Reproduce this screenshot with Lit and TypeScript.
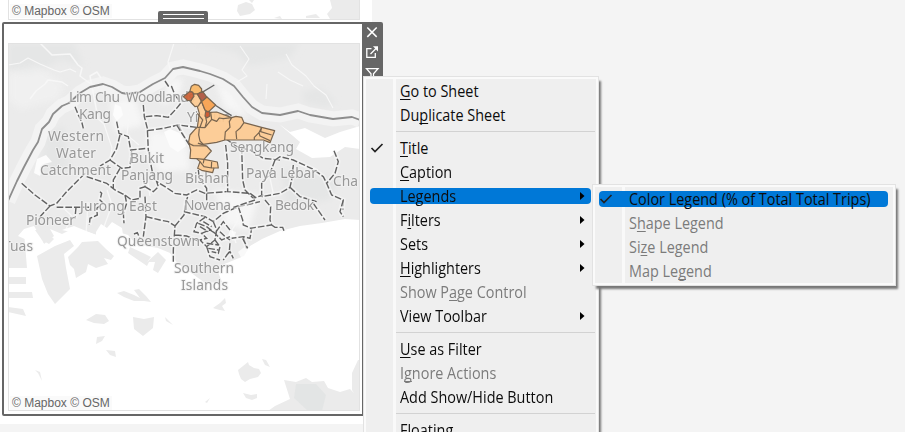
import { LitElement, html, svg, css, nothing } from "lit";
import { customElement, property } from "lit/decorators.js";
import { classMap } from "lit/directives/class-map.js";

interface MenuEntry {
  label?: string;
  key?: number;
  checked?: boolean;
  active?: boolean;
  disabled?: boolean;
  sub?: boolean;
}

const MAIN: MenuEntry[] = [
  { label: "Go to Sheet", key: 0 },
  { label: "Duplicate Sheet", key: 2 },
  {},
  { label: "Title", key: 0, checked: true },
  { label: "Caption", key: 0 },
  { label: "Legends", active: true, sub: true },
  { label: "Filters", key: 1, sub: true },
  { label: "Sets", sub: true },
  { label: "Highlighters", key: 0, sub: true },
  { label: "Show Page Control", key: 6, disabled: true },
  { label: "View Toolbar", sub: true },
  {},
  { label: "Use as Filter", key: 0 },
  { label: "Ignore Actions", key: 1, disabled: true },
  { label: "Add Show/Hide Button" },
  {},
  { label: "Floating" },
];

const LEGENDS: MenuEntry[] = [
  { label: "Color Legend (% of Total Total Trips)", checked: true, active: true },
  { label: "Shape Legend", key: 1, disabled: true },
  { label: "Size Legend", key: 2, disabled: true },
  { label: "Map Legend", key: 6, disabled: true },
];

@customElement("context-menu")
export class ContextMenu extends LitElement {
  @property({ attribute: false }) items: MenuEntry[] = [];

  static styles = css`
    :host {
      display: block;
      box-sizing: border-box;
      border: 1px solid #e2e2e2;
      background: #fafafa;
      padding: 2px;
      box-shadow: 3px 4px 2px -1px #777;
      font: 15.5px/24px "Open Sans", "Noto Sans", sans-serif;
      color: #0c0c0c;
    }
    .body {
      box-sizing: border-box;
      height: 100%;
      padding-top: 1px;
      background: linear-gradient(90deg, #efefef 27px, #f9f9f9 27px 30px, #efefef 30px);
    }
    .row {
      display: grid;
      grid-template-columns: 34px 1fr 16px;
      height: 24px;
      position: relative;
      isolation: isolate;
      white-space: nowrap;
    }
    .row.active::before {
      content: "";
      position: absolute;
      z-index: -1;
      inset: 3px 5px 5px 4px;
      border-radius: 4px;
      background: #0078d7;
    }
    .disabled { color: #7b7b7b; }
    .label {
      justify-self: start;
      transform-origin: left;
      transform: translateY(-1px) scaleX(0.93);
    }
    u { text-decoration-thickness: 1px; text-underline-offset: 2px; text-decoration-skip-ink: none; }
    .sep { height: 9px; padding: 3px 1px 0 30px; box-sizing: border-box; }
    .line { height: 1px; background: #d2d2d2; }
    svg { display: block; }
    .check { margin: 5px 0 0 4px; }
    .arrow { margin-top: 7px; }
  `;

  private text(e: MenuEntry) {
    const s = e.label!;
    if (e.key === undefined) return s;
    return html`${s.slice(0, e.key)}<u>${s[e.key]}</u>${s.slice(e.key + 1)}`;
  }

  render() {
    return html`<div class="body">
      ${this.items.map((e) =>
        e.label
          ? html`<div class=${classMap({ row: true, active: !!e.active, disabled: !!e.disabled })}>
              <span>${e.checked
                ? html`<svg class="check" width="14" height="12" viewBox="0 0 14 12"><path d="M1.5 6 L5 9.5 L12.5 2" fill="none" stroke="#222" stroke-width="1.7" /></svg>`
                : nothing}</span>
              <span class="label">${this.text(e)}</span>
              ${e.sub
                ? html`<svg class="arrow" width="6" height="9" viewBox="0 0 6 9"><path d="M0 0 L4.5 4 L0 8Z" fill="#000" /></svg>`
                : nothing}
            </div>`
          : html`<div class="sep"><div class="line"></div></div>`
      )}
    </div>`;
  }
}

const BORDER =
  "M8 201L17 181L24 167L33 150L38 142L42 129L49 122L53 114L62 106L69 103L80 93L90 87L103 84L112 87L122 93L128 94L140 92L153 84L165 78L173 69L183 67L200 71L210 74L223 79L234 86L243 97L252 107L262 113L280 115L298 111L310 115L333 119L352 117L360 120";

// [text, x, baseline, rendered width]
const PLACES: [string, number, number, number][] = [
  ["Lim Chu", 69, 102, 51],
  ["Kang", 79, 119, 32],
  ["Woodlands", 126, 102, 69],
  ["Yishun", 187, 122, 43],
  ["Western", 48, 141, 56],
  ["Water", 56, 158, 40],
  ["Catchment", 40, 175, 71],
  ["Bukit", 130, 163, 34],
  ["Panjang", 121, 180, 52],
  ["Bishan", 185, 183, 44],
  ["Sengkang", 230, 152, 64],
  ["Paya Lebar", 246, 178, 71],
  ["Cha", 333, 186, 25],
  ["Jurong East", 80, 211, 77],
  ["Pioneer", 26, 225, 49],
  ["Novena", 184, 210, 47],
  ["Bedok", 275, 210, 39],
  ["Tuas", 3, 251, 30],
  ["Queenstown", 117, 246, 83],
  ["Southern", 174, 273, 60],
  ["Islands", 181, 290, 47],
];

@customElement("island-map")
export class IslandMap extends LitElement {
  static styles = css`
    :host { display: block; }
    svg { display: block; }
    .place {
      font: 13.8px "Noto Sans", "Open Sans", sans-serif;
      fill: #989898;
      stroke: #f2f2f2;
      stroke-opacity: 0.75;
      stroke-width: 2.2px;
      paint-order: stroke;
      stroke-linejoin: round;
    }
    .road { fill: none; stroke: #626262; stroke-width: 4.2; stroke-dasharray: 20 6; }
    .glow { fill: none; stroke: #f7f7f7; stroke-width: 14; stroke-opacity: 0.6; }
    .zone { stroke: #79654f; stroke-width: 3.6; stroke-linejoin: round; }
  `;

  private readonly center =
    "M315 3L325 18L335 20L345 45L360 65M250 75L253 110L262 145L265 210L270 240L280 290L285 305M257 110L290 107L325 112L350 85L370 60M262 152L310 145L355 135L410 142M355 135L370 165L388 194L415 194M45 80L55 105L65 125L70 145M170 125L177 160L205 170L212 210L262 205M180 165L170 205L150 240L120 258M150 240L185 265L210 262L215 215M180 265L160 300L160 325M80 290L140 310L165 330L195 345L215 360L240 355L240 325L255 320L250 290M255 320L280 335L295 320L290 305L315 320L345 340L380 345L410 330L435 340L500 335M120 335L125 340L120 360L130 370L110 385L112 405L90 415L88 435M195 345L200 370L190 400L192 430M255 350L258 410L250 470M258 410L300 420L325 425L345 438L340 510L340 545M345 438L372 405L378 365L385 345M372 395L435 410L460 425L490 400L535 380M497 195L503 250L503 335L570 340L590 355M415 270L418 295L440 325L440 365M545 200L548 300L555 330L580 355L610 345M535 380L600 365M535 380L548 420L550 435L575 445L570 475L550 470L515 475M550 470L560 505M345 465L380 468L420 485M222 462L232 458L240 475M500 178L530 200L570 210L610 235L660 240";
  private readonly downtown =
    "M435 412L410 430L402 455L425 460L450 450L465 460L490 425L510 450M415 430L440 440L465 460L485 480L510 470M460 425L470 450L465 480L440 500L420 480L440 475L425 460M440 500L450 530L480 540M465 480L480 500L475 520L455 515M480 455L495 470L510 480M420 440L445 455M430 425L455 440M440 490L475 495M445 505L475 510M500 525L510 515L520 535M510 490L508 515L490 540";
  private readonly east =
    "M285 240L270 280L245 310L245 345M285 240L300 230L340 240L400 268L430 290L440 310L455 345L490 360L488 390M340 255L335 300L330 322L300 340L245 350M330 322L360 350L410 365M462 212L475 245L465 280L440 310M225 360L160 382";
  private readonly southeast =
    "M255 0L272 20L270 60L275 75L210 85M275 75L285 82L308 82L313 95M188 115L203 145M400 10L435 60M490 0L480 35L490 50";
  private readonly west =
    "M65 190L105 225L150 258L170 250L200 215L255 160M150 258L120 290M170 262L270 262M228 262L225 295M530 15L568 75";

  private roads(d: string, x: number, y: number) {
    return svg`<g transform=${`translate(${x} ${y}) scale(.3333)`}><path class="glow" d=${d}/><path class="road" d=${d}/></g>`;
  }

  render() {
    return html`<svg width="352" height="368" viewBox="8 43 352 368">
      <defs><filter id="soft"><feGaussianBlur stdDeviation="3" /></filter></defs>
      <rect x="8" y="43" width="352" height="368" fill="#fff" />
      <path fill="#ebebeb" d="M8 43H360V220L345 219L322 223L300 226L280 231L262 239L250 246L244 256L222 265L218 272L222 282L205 283L190 272L178 264L170 253L158 248L146 246L135 243L128 235L112 230L100 236L88 232L70 230L62 234L50 229L54 236L44 244L34 230L24 232L27 268H8Z" />
      <g fill="#e5e6e6" filter="url(#soft)">
        <path d="M8 43H74L84 66L60 60L30 76L8 70Z" />
        <path d="M190 43H300L290 58L250 66L235 52Z" />
        <path d="M302 92L320 87L336 102L326 108L304 103Z" />
        <path d="M44 132L64 126L70 170L40 175Z" />
        <path d="M282 170L340 178L330 200L285 205Z" />
      </g>
      <g fill="#f6f6f6" filter="url(#soft)">
        <path d="M8 72L38 66L65 85L58 100L20 110L8 100Z" opacity=".5" />
        <path d="M150 130L185 135L190 170L160 172L146 152Z" />
        <path d="M110 100L135 98L144 125L115 132Z" />
        <path d="M170 80L183 78L178 100L160 104Z" />
        <path d="M215 82L232 90L250 118L225 108Z" />
        <path d="M215 190L260 195L248 230L225 225Z" />
      </g>
      <path d=${BORDER} fill="none" stroke="#f3f3f3" stroke-width="15" />
      <path fill="#fff" d="M279 124L290 132L305 128L325 138L340 132L360 126V149L345 147L330 157L312 158L296 149L300 142Z" />
      <path fill="#fcfcfc" d="M115 104l6 3 2 8-6 6-4-6zM164 132l6-3 12 5 4 12-8 6-8-5zM37 159l9-4 6 7-8 2-4 12-6-3z" />
      <g fill="none" stroke="#f7f7f7" stroke-width="1.5" stroke-linejoin="round">
        <path d="M40 43L52 55L70 54L78 65L82 68L80 76L88 82L99 88M98 118L90 76L97 72L101 78M30 99L36 91L45 84L48 80L62 82L68 86" />
        <path d="M174 43L168 62L171 72M8 65L20 63L28 58L40 64L54 70L60 72L70 69L76 72" stroke-width="1.2" />
        <path d="M240 46L249 59L242 70L247 76L237 82M286 54L292 65L306 76L314 86L326 95L333 108M278 72L290 80L303 86M267 84L266 99M97 118L104 124L112 148L108 170M130 105L127 135L139 145" stroke-width="1.1" />
        <path d="M88 202L86 235M107 190L112 205L102 232M236 205L238 220L232 230L236 243M146 170L150 196M60 205L72 216L66 229M270 178L274 197M300 165L318 170" stroke-width="1.3" />
      </g>
      <g fill="#fff">
        <path d="M18 236L24 229L34 226L40 236L45 246L60 248L50 258L28 262L27 240ZM62 230l12-4 22 9-3 6-18-8z" />
        <path d="M8 269H27V277H8ZM96 232l5-8 6 4 5-6 10 6 2 14-28-3z" />
        <path d="M238 252l9-7 5 8-9 8zM230 230l6 2-2 8-6-4z" opacity=".7" />
      </g>
      <g fill="#ebebeb">
        <path d="M37 256L55 246L70 240L74 246L64 254L66 268L70 289L55 304L48 294L42 279Z" />
        <path d="M68 257L78 247L82 242L98 241L106 249L114 256L111 260L104 258L108 264L96 268L88 264L86 272L76 278L74 269L70 265Z" />
        <path d="M35 230L44 230L54 239L49 244L42 240Z" />
        <path d="M8 277H26L26 284H8ZM8 292H32L33 298H8ZM8 307L23 309L26 316L8 312Z" />
        <path d="M130 247L143 253L151 257L147 262L158 252L166 260L158 273L153 270L155 262L149 262L147 266L128 253Z" />
        <path d="M117 293L124 291L134 295L140 298L134 290L139 289L146 296L151 302L144 301L134 301L124 297Z" />
        <path d="M86 320L96 314L105 315L109 321L104 324L94 323ZM133 317L144 319L154 317L153 328L143 336L134 329ZM165 317L173 325L166 321ZM97 337l8-1-3 5-6 3zM106 350l9 1 1 6-6-2zM35 370l5 2 2 9-4-8z" />
        <path d="M213 308l7-5 5-5 1 5-4 3 3 5-5-1-4-1zM238 370l5-4 5-4 1 3 5 3 5 1 2 4-3 4-8 2-5 3-4-3-2-5zM262 359l4 1 4 7-5-2zM243 393l8 2 6-1 0 4-5 2-6-2zM205 402l5-4-3 5z" />
        <path d="M284 380L296 382L306 378L312 382L324 381L328 388L340 392L350 389L360 399V411H268L275 406L290 399ZM352 373L358 360H360V402L352 390Z" />
      </g>
      <path d="M296 384L316 384L326 395L322 411H308L294 398Z" fill="#e3e5e5" />
      <path d=${BORDER} fill="none" stroke="#8d8d8d" stroke-width="1.8" stroke-linejoin="round" />
      ${this.roads(this.center, 60, 80)}
      ${this.roads(this.downtown, 60, 80)}
      ${this.roads(this.east, 180, 80)}
      ${this.roads(this.southeast, 180, 200)}
      ${this.roads(this.west, 0, 120)}
      ${PLACES.map(([t, x, y, w]) => svg`<text class="place" x=${x} y=${y} textLength=${w}>${t}</text>`)}
      <g transform="translate(60 80) scale(.3333)" fill="#fdca91" fill-opacity=".93">
        <path d="M425 38L463 15M465 75L500 98L515 107" fill="none" stroke="#666" stroke-width="4" />
        <path class="zone" d="M412 142L418 100L412 80L425 65L436 92L450 97L470 96L515 113L528 109L545 112L552 128L605 142L644 152L630 188L610 180L495 180L470 187L430 193L415 190L440 198L454 213L432 238L472 246L475 264L462 264L458 278L425 271L413 265L420 245L410 236L390 235L392 210L386 185L390 165L405 148Z" />
        <path class="zone" fill="none" d="M418 145L416 165L420 183L430 193M412 142L435 143L440 125L437 112M435 143L455 118L470 124L478 114L490 116L515 113L508 125L510 142L496 156L494 180M552 128L540 145L528 155L530 177M605 142L597 158L583 172L583 180M605 142L602 155L635 165M597 158L600 168L630 182M386 190L400 197L440 198M410 236L432 238M420 245L432 260L455 264M432 238L430 250M455 245L454 264L462 264M452 97L455 118M412 100L428 120L420 142" />
        <path class="zone" d="M390 32L394 19L404 13L416 16L425 27L424 38L412 42L402 42Z" fill="#f9b765" />
        <path class="zone" d="M402 42L412 42L425 62L415 78L405 80L392 66Z" />
        <path class="zone" d="M370 50L388 35L398 36L402 49L392 62L382 61Z" fill="#cc6035" />
        <path class="zone" d="M412 42L428 34L441 52L425 65Z" fill="#ad543c" />
        <path class="zone" d="M425 65L441 51L467 75L444 97L434 88Z" fill="#f7a04c" />
        <path class="zone" d="M437 95L448 94L450 108L440 114L435 108Z" fill="#c9542e" />
      </g>
      <rect x="8.5" y="43.5" width="351" height="367" fill="none" stroke="#e2e2e2" />
    </svg>`;
  }
}

@customElement("app-root")
export class AppRoot extends LitElement {
  static styles = css`
    :host {
      display: block;
      position: relative;
      width: 905px;
      height: 432px;
      overflow: hidden;
      background: #f4f4f4;
      font-family: "Liberation Sans", Arial, sans-serif;
    }
    .page { display: flex; flex-direction: column; width: 372px; height: 424px; background: #fff; }
    .previous {
      box-sizing: border-box;
      height: 20px;
      margin: 0 12px 2px 8px;
      border: 1px solid #e2e2e2;
      border-top: 0;
      position: relative;
    }
    .scrap { position: absolute; right: 0; top: 0; }
    .credit { font-size: 12px; line-height: 14px; color: #666; background: #fafafa; padding: 0 2px; width: max-content; }
    .previous .credit { margin: 4px 0 0 1px; }
    .zone { display: flex; height: 394px; margin-left: 2px; width: 381px; align-items: flex-start; }
    .frame {
      box-sizing: border-box;
      width: 362px;
      height: 394px;
      border: 2px solid #666;
      border-radius: 2px 0 0 2px;
      padding: 19px 0 0 4px;
      position: relative;
    }
    .frame .credit { position: absolute; left: 6px; bottom: 4px; }
    .tools { width: 19px; height: 60px; margin-left: -2px; padding-left: 2px; background: #666; border-radius: 0 2px 0 0; }
    .tools svg { display: block; }
    .grip {
      position: absolute;
      left: 158px;
      top: 11px;
      box-sizing: border-box;
      width: 50px;
      height: 12px;
      padding: 3px 4px 0 5px;
      border-radius: 2px 2px 0 0;
      background: #666;
    }
    .grip i { display: block; height: 1px; margin-bottom: 3px; background: #fff; }
    .main { position: absolute; left: 363px; top: 76px; width: 236px; height: 370px; }
    .sub { position: absolute; left: 592px; top: 184px; width: 304px; height: 102px; }
  `;

  render() {
    return html`
      <div class="page">
        <div class="previous">
          <svg class="scrap" width="125" height="19" viewBox="234 0 125 19" fill="#ebebeb">
            <path d="M238 5l8-3 6 2 3 6-5 4-10 2-3-5zM249 0h5l-2 3zM330 0H360V19H330L327 14L332 8ZM306 16l10-2 4 4h-14zM274 18l6-2 2 3z" />
          </svg>
          <div class="credit">© Mapbox © OSM</div>
        </div>
        <div class="zone">
          <div class="frame">
            <island-map></island-map>
            <div class="credit">© Mapbox © OSM</div>
          </div>
          <div class="tools">
            <svg width="19" height="56" viewBox="364 22 19 56" fill="none" stroke="#fff" stroke-width="1.5">
              <path d="M367.3 27.5L376.7 36.9M376.7 27.5L367.3 36.9" />
              <path d="M371.5 48.7H366.8V57.3H375.3V53M370.5 54L376.5 48" stroke-width="1.3" />
              <path d="M373 46.3H378V51.5Z" fill="#fff" stroke="none" />
              <path d="M366.5 68.7H378L373.5 73.8V79H371V73.8Z" stroke-width="1.3" />
            </svg>
          </div>
        </div>
      </div>
      <div class="grip"><i></i><i></i></div>
      <context-menu class="main" .items=${MAIN}></context-menu>
      <context-menu class="sub" .items=${LEGENDS}></context-menu>
    `;
  }
}
